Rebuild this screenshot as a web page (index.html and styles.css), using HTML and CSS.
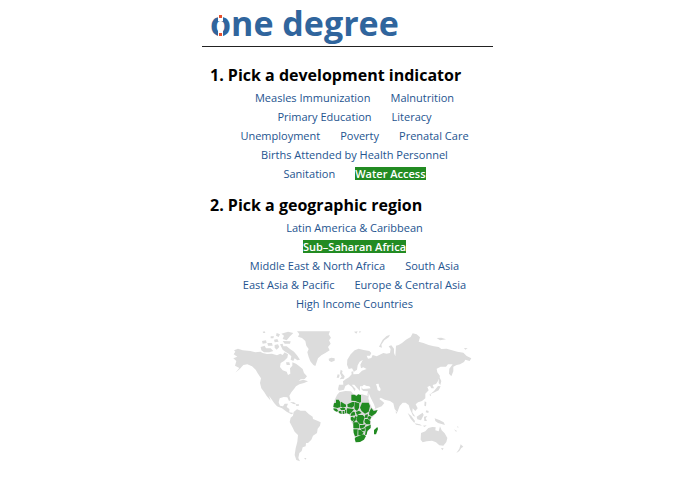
FILE: index.html
```html
<!DOCTYPE html>
<html lang="en">
<head>
<meta charset="utf-8">
<title>one degree</title>
<link rel="stylesheet" href="styles.css">
</head>
<body>
<div class="page">
  <header class="masthead">
    <h1 class="logo">one degree<span class="notch notch-top"></span><span class="notch notch-bottom"></span></h1>
  </header>
  <main>
    <section>
      <h2 class="step">1. Pick a development indicator</h2>
      <nav class="choices" aria-label="Development indicator">
        <a href="#measles">Measles Immunization</a>
        <a href="#malnutrition">Malnutrition</a>
        <a href="#education">Primary Education</a>
        <a href="#literacy">Literacy</a>
        <a href="#unemployment">Unemployment</a>
        <a href="#poverty">Poverty</a>
        <a href="#prenatal">Prenatal Care</a>
        <a href="#births">Births Attended by Health Personnel</a>
        <a href="#sanitation">Sanitation</a>
        <a href="#water" class="selected" aria-current="true">Water Access</a>
      </nav>
    </section>
    <section>
      <h2 class="step">2. Pick a geographic region</h2>
      <nav class="choices" aria-label="Geographic region">
        <a href="#latin-america">Latin America &amp; Caribbean</a>
        <a href="#sub-saharan" class="selected" aria-current="true">Sub–Saharan Africa</a>
        <a href="#mena">Middle East &amp; North Africa</a>
        <a href="#south-asia">South Asia</a>
        <a href="#east-asia">East Asia &amp; Pacific</a>
        <a href="#europe">Europe &amp; Central Asia</a>
        <a href="#high-income">High Income Countries</a>
      </nav>
    </section>
    <svg class="map" viewBox="20 18 729 396" role="img" aria-label="World map">
      <g class="land">
        <!-- North and Central America -->
        <path d="M25 88L30 80 26 76 38 71 52 76 75 78 90 82 105 80 112 84 125 87 140 86 155 91 165 86 172 90 178 82 188 88 186 98 176 108 166 114 164 126 172 136 184 140 188 150 195 146 194 130 201 122 201 112 212 116 222 124 232 132 236 144 245 154 238 162 226 163 220 168 234 164 248 169 236 174 222 178 212 184 206 192 198 202 192 212 196 226 191 228 186 217 175 216 163 220 160 232 164 242 173 244 178 236 188 236 184 246 192 252 192 262 205 264 198 268 184 260 170 250 155 244 147 235 138 222 131 212 136 227 124 213 117 202 108 190 104 174 107 160 98 146 91 134 80 124 66 118 54 120 44 131 30 143 42 129 29 122 33 108 24 100 36 95Z"/>
        <!-- Arctic islands -->
        <path d="M106 66L118 62 122 70 136 70 144 78 132 82 116 82 108 76ZM110 48L122 46 124 54 112 56ZM126 54L140 54 142 62 128 62ZM146 44L156 42 160 50 148 52ZM148 60L158 58 162 66 154 74 148 68ZM164 58L172 56 174 64 184 64 194 72 206 80 216 92 224 104 216 106 208 100 204 108 196 104 198 94 190 86 180 80 172 74ZM168 26L188 20 204 24 194 34 184 46 172 42 176 32ZM172 48L196 49 194 56 178 56ZM154 24L164 28 160 36 152 32ZM136 34L146 34 144 40 136 40ZM112 20L118 19 120 24 114 24ZM182 112L192 112 194 120 184 120Z"/>
        <!-- Greenland and Iceland -->
        <path d="M215 19H314L310 28 317 38 311 46 316 56 308 66 313 76 300 84 288 91 278 100 270 123 264 120 255 109 250 96 246 82 250 72 243 62 240 48 230 39 218 35 222 27ZM310 101L318 98 328 100 328 107 318 111 311 107Z"/>
        <!-- Caribbean -->
        <path d="M194 231L206 232 213 238 204 237ZM212 238L221 238 220 243 212 242Z"/>
        <!-- South America -->
        <path d="M205 261L215 253 226 257 240 257 250 267 262 275 263 282 276 287 286 292 284 302 277 311 275 324 263 332 258 344 248 354 242 354 241 364 232 367 229 378 222 384 219 399 224 409 213 405 208 390 211 370 216 350 218 330 208 320 201 306 193 291 196 278 203 272ZM236 399L243 399 241 404Z"/>
        <!-- British Isles -->
        <path d="M346 134L352 138 350 144 358 154 356 161 343 163 349 155 344 145ZM337 148L343 149 341 158 334 158Z"/>
        <!-- Europe and Asia -->
        <path d="M366 104L376 88 388 76 400 71 415 75 432 78 438 84 434 92 424 92 428 101 438 99 442 90 454 94 474 84 484 86 494 84 496 72 490 64 498 61 506 71 506 84 510 94 512 62 520 60 530 54 542 44 556 36 562 25 574 28 584 37 580 50 594 54 610 60 626 64 640 66 648 72 664 71 680 76 696 80 714 83 724 93 738 100 733 108 720 104 716 111 704 118 694 120 684 125 684 139 678 154 671 146 672 131 682 118 668 118 662 125 646 125 634 131 636 142 644 153 638 168 632 177 622 180 626 190 618 190 614 182 606 186 610 196 600 206 600 220 590 228 578 232 571 238 577 250 570 258 562 250 561 262 570 275 563 272 554 253 550 240 541 233 532 233 523 243 516 262 508 252 504 235 494 228 478 224 466 218 462 222 470 228 477 234 469 244 449 252 444 244 434 227 426 210 428 199 414 198 408 193 410 184 404 184 404 198 396 190 387 179 379 179 391 192 388 199 380 186 369 178 360 183 356 194 341 197 338 193 341 179 354 179 353 169 361 163 371 157 379 148 378 140 384 139 384 148 400 147 410 137 424 132 414 127 407 130 405 119 412 105 403 110 397 121 395 134 386 140 380 130 370 132 365 119Z"/>
        <!-- Arctic Russia -->
        <path d="M461 65L472 44 484 33 494 29 490 37 477 46 468 59 470 68ZM386 20L397 19 393 26ZM402 18L408 20 402 24ZM634 39L648 38 662 43 644 46ZM716 69L727 70 720 74Z"/>
        <!-- Japan and Sakhalin -->
        <path d="M641 154L648 168 645 180 640 174ZM638 183L646 184 640 196 628 202 614 208 626 198ZM613 206L618 210 614 214Z"/>
        <!-- South East Asia -->
        <path d="M598 229L603 232 602 244 597 242ZM603 256L610 258 609 264 601 262ZM547 264L558 273 569 288 567 294 556 281ZM568 295L584 298 590 302 572 299ZM574 275L592 263 595 270 587 286 576 283ZM596 275L606 273 601 280 605 288 597 288ZM628 280L642 285 655 292 659 300 646 296 638 294 630 288ZM511 258L516 263 512 266ZM592 302L604 301 598 306Z"/>
        <!-- Australia and New Zealand -->
        <path d="M587 324L600 319 609 309 621 306 631 307 630 316 640 319 644 304 649 316 658 325 666 339 663 351 654 362 642 361 632 352 620 347 604 349 592 352 586 344ZM647 369L655 370 651 376ZM706 358L714 365 708 369 702 378 693 384 702 371ZM686 313L695 318 692 320ZM696 302L700 307 697 308Z"/>
        <!-- Northern Africa -->
        <path d="M342 202L360 198 377 199 383 206 398 211 410 208 428 213 432 232 440 248 446 254 457 254 446 272 435 282 437 300 430 315 420 332 412 345 398 352 390 345 385 322 386 305 378 290 376 276 370 267 345 267 330 257 323 244 328 225 335 210Z"/>
      </g>
      <!-- Seas cut into the Eurasian landmass -->
      <path class="water" d="M409 185L416 179 424 183 432 184 436 190 424 191 412 192ZM452 177L460 176 461 184 466 192 464 199 457 196 455 186ZM430 204L436 218 446 238 450 250 446 250 438 238 430 222Z"/>
      <!-- Countries of the selected region -->
      <g class="active">
        <path d="M378 209L387 209 394 213 398 208 407 210 407 231 403 233 390 228 378 227Z"/>
        <path d="M332 224L340 224 345 232 346 246 336 249 324 246 326 235 332 233Z"/>
        <path d="M347 230L362 239 362 245 352 248 347 245Z"/>
        <path d="M366 238L381 231 388 231 386 243 380 248 367 246Z"/>
        <path d="M389 231L402 235 401 249 395 258 388 253 387 245Z"/>
        <path d="M410 233L430 233 434 243 430 260 419 266 409 258 404 248Z"/>
        <path d="M438 249L445 258 457 255 452 265 439 274 431 269 432 260Z"/>
        <path d="M365 250L380 251 386 253 379 262 372 268 364 264Z"/>
        <path d="M344 249L360 249 358 255 347 255Z"/>
        <path d="M324 250L334 251 339 258 333 260 325 255Z"/>
        <path d="M340 258L348 258 349 267 341 264Z"/>
        <path d="M352 258L357 258 357 267 352 266Z"/>
        <path d="M359 254L363 254 362 265 359 265Z"/>
        <path d="M383 260L388 261 390 271 376 273 377 266Z"/>
        <path d="M391 261L401 257 409 264 395 270Z"/>
        <path d="M376 277L383 275 387 282 381 289 376 284Z"/>
        <path d="M390 273L395 276 390 288 382 293 386 281Z"/>
        <path d="M397 270L412 270 418 276 414 289 414 298 402 296 396 289 393 284Z"/>
        <path d="M420 269L428 268 426 278 418 279Z"/>
        <path d="M431 272L438 276 434 285 426 279Z"/>
        <path d="M419 282L428 282 435 289 434 298 423 298 417 291Z"/>
        <path d="M384 292L397 292 402 299 401 310 384 310Z"/>
        <path d="M404 300L414 300 421 298 417 307 407 311 403 308Z"/>
        <path d="M420 306L436 299 436 309 426 318 424 329 419 330 421 317Z"/>
        <path d="M407 313L419 310 418 319 409 318Z"/>
        <path d="M384 313L397 313 396 332 389 334 385 324Z"/>
        <path d="M399 314L406 315 415 323 408 331 399 331Z"/>
        <path d="M391 337L401 333 413 328 422 333 416 344 404 351 391 352 388 341Z"/>
        <path d="M446 315L456 306 458 312 452 328 446 328Z"/>
      </g>
    </svg>
  </main>
</div>
</body>
</html>
```

FILE: styles.css
```css
body {
  margin: 0;
  background: #fff;
  color: #000;
  font-family: "Open Sans", "Noto Sans", sans-serif;
}

.page {
  max-width: 291px;
  margin: 0 auto;
}

.masthead {
  padding: 0 8px;
  border-bottom: 1px solid #222;
}

.logo {
  position: relative;
  margin: 0;
  color: #30659d;
  font-size: 34px;
  line-height: 46px;
  font-weight: 700;
}

/* White gaps that split the "o", each holding a red dot */
.notch {
  position: absolute;
  left: 8px;
  width: 3px;
  height: 3px;
  border: solid #fff;
  background: #e8502c;
}

.notch-top {
  top: 14px;
  border-width: 1px 1px 3px;
}

.notch-bottom {
  top: 30px;
  border-width: 3px 1px 1px;
}

.step {
  margin: 0 0 5px;
  padding-left: 8px;
  font-size: 16px;
  line-height: 22px;
  font-weight: 700;
}

section {
  padding-top: 17px;
}

section + section {
  padding-top: 14px;
}

.choices {
  display: flex;
  flex-wrap: wrap;
  justify-content: center;
  column-gap: 20px;
  row-gap: 6px;
  margin: 0 20px 0 34px;
}

.choices a {
  color: #24548f;
  font-size: 11px;
  line-height: 13px;
  font-weight: 500;
  text-decoration: none;
}

.choices .selected {
  background: #228b22;
  color: #fff;
  font-weight: 600;
}

.map {
  display: block;
  width: calc(100% - 48px);
  margin: 21px 18px 0 30px;
}

.land {
  fill: #dcdcdc;
}

.water {
  fill: #fff;
}

.active {
  fill: #228b22;
}
```
